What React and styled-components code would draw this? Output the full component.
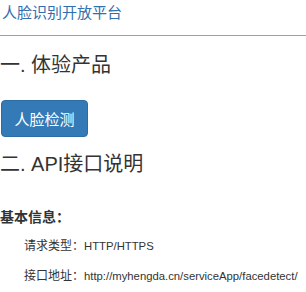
import styled, { createGlobalStyle } from 'styled-components';

const GlobalStyle = createGlobalStyle`
  body {
    margin: 0;
    background: #fff;
    font-family: "Liberation Sans", "Noto Sans CJK SC", sans-serif;
    color: #333;
  }
`;

const App = () => {
  return (
    <>
      <GlobalStyle />
      <SPage>
        <SHeader>
          <SBrand>人脸识别开放平台</SBrand>
        </SHeader>
        <SSection>
          <SHeading>一. 体验产品</SHeading>
          <SButton>人脸检测</SButton>
        </SSection>
        <SSection $top={13}>
          <SHeading>二. API接口说明</SHeading>
          <SSubHeading>基本信息：</SSubHeading>
          <SInfo $top={10}>请求类型：<SValue>HTTP/HTTPS</SValue></SInfo>
          <SInfo $top={12}>接口地址：<SValue>http://myhengda.cn/serviceApp/facedetect/</SValue></SInfo>
        </SSection>
      </SPage>
    </>
  );
};

const SPage = styled.div`
  width: 306px;
  overflow: hidden;
`;

const SHeader = styled.div`
  padding: 0 2px 9px;
  border-bottom: 1px solid #7ba7d7;
`;

const SBrand = styled.div`
  font-size: 15px;
  line-height: 26px;
  color: #2f70b0;
`;

const SSection = styled.div`
  margin-top: ${({ $top }) => $top || 15}px;
  display: flex;
  flex-direction: column;
  align-items: flex-start;
`;

const SHeading = styled.h2`
  margin: 0;
  font-size: 20px;
  line-height: 28px;
  font-weight: 400;
  color: #333;
`;

const SButton = styled.button`
  margin: 21px 0 0 1px;
  width: 87px;
  height: 37px;
  padding: 0;
  border: 1px solid #2e6da4;
  border-radius: 4px;
  background-color: #337ab7;
  color: #fff;
  font-family: inherit;
  font-size: 15px;
  cursor: pointer;
`;

const SSubHeading = styled.h4`
  margin: 29px 0 0;
  font-size: 14px;
  line-height: 20px;
  font-weight: 700;
  color: #333;
`;

const SInfo = styled.p`
  margin: ${({ $top }) => $top}px 0 0 24px;
  font-size: 12px;
  line-height: 18px;
  color: #333;
  white-space: nowrap;
`;

const SValue = styled.span`
  font-size: 11.3px;
`;

export default App;
